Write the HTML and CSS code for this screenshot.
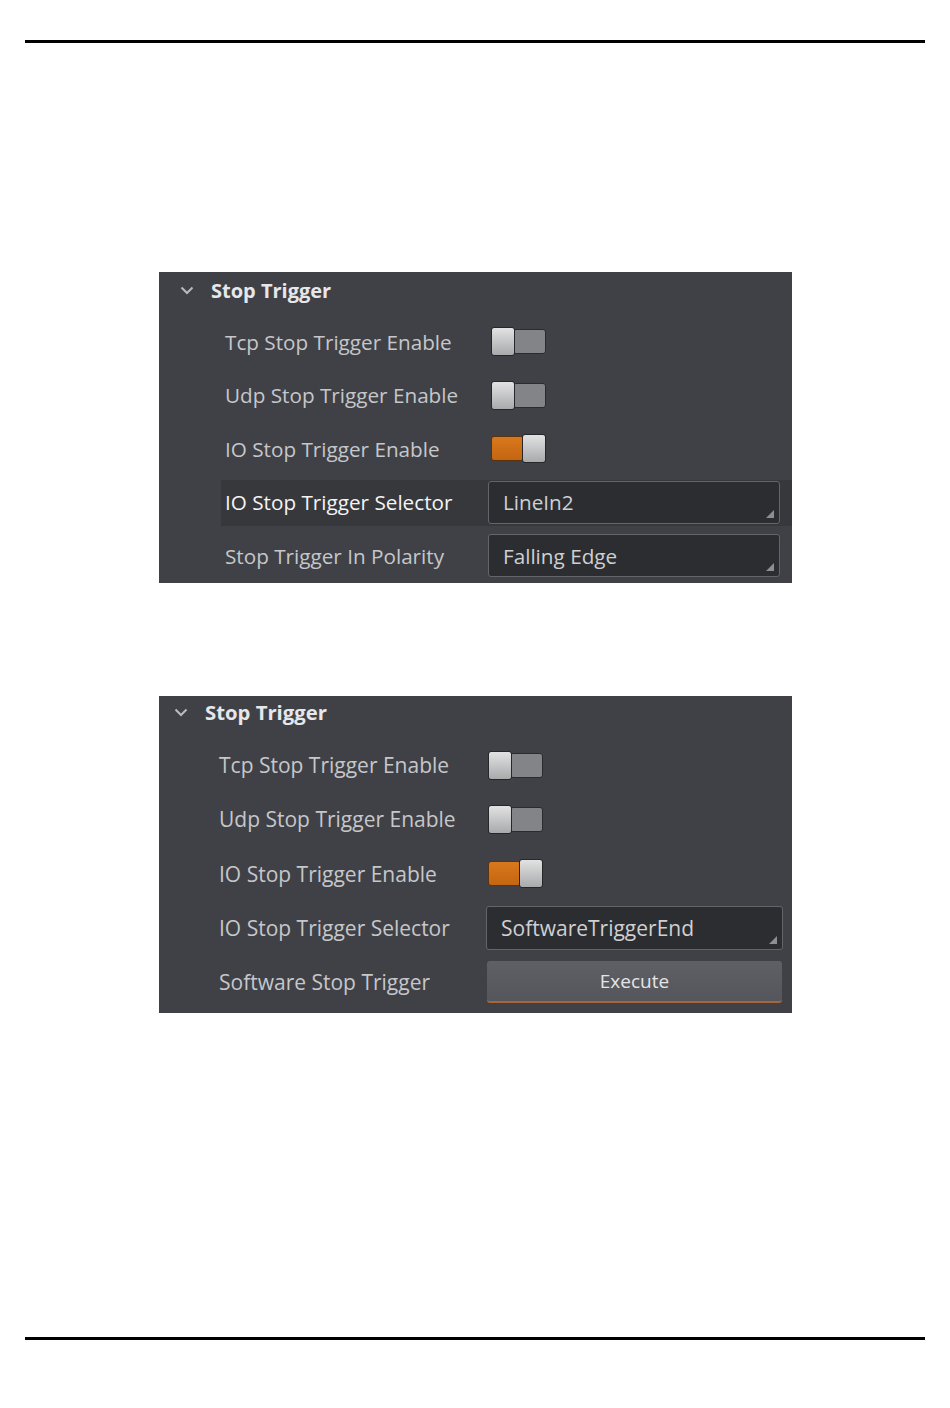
FILE: index.html
```html
<!DOCTYPE html>
<html lang="en">
<head>
  <meta charset="UTF-8">
  <meta name="viewport" content="width=device-width, initial-scale=1.0">
  <title>Stop Trigger</title>
  <link rel="stylesheet" href="styles.css">
</head>
<body>
  <div class="page">
    <div class="rule top"></div>

    <div class="panel first">
      <div class="panel-head">
        <svg class="chevron" width="14" height="9" viewBox="0 0 14 9"><path d="M1.5 1.5 L7 7 L12.5 1.5" fill="none" stroke="#b9babd" stroke-width="2"/></svg>
        <span>Stop Trigger</span>
      </div>
      <div class="row">
        <div class="label">Tcp Stop Trigger Enable</div>
        <div class="toggle"><span class="knob"></span><span class="track"></span></div>
      </div>
      <div class="row">
        <div class="label">Udp Stop Trigger Enable</div>
        <div class="toggle"><span class="knob"></span><span class="track"></span></div>
      </div>
      <div class="row">
        <div class="label">IO Stop Trigger Enable</div>
        <div class="toggle on"><span class="track"></span><span class="knob"></span></div>
      </div>
      <div class="row selected">
        <div class="label">IO Stop Trigger Selector</div>
        <div class="select">LineIn2</div>
      </div>
      <div class="row">
        <div class="label">Stop Trigger In Polarity</div>
        <div class="select">Falling Edge</div>
      </div>
    </div>

    <div class="panel second">
      <div class="panel-head">
        <svg class="chevron" width="14" height="9" viewBox="0 0 14 9"><path d="M1.5 1.5 L7 7 L12.5 1.5" fill="none" stroke="#b9babd" stroke-width="2"/></svg>
        <span>Stop Trigger</span>
      </div>
      <div class="row">
        <div class="label">Tcp Stop Trigger Enable</div>
        <div class="toggle"><span class="knob"></span><span class="track"></span></div>
      </div>
      <div class="row">
        <div class="label">Udp Stop Trigger Enable</div>
        <div class="toggle"><span class="knob"></span><span class="track"></span></div>
      </div>
      <div class="row">
        <div class="label">IO Stop Trigger Enable</div>
        <div class="toggle on"><span class="track"></span><span class="knob"></span></div>
      </div>
      <div class="row">
        <div class="label">IO Stop Trigger Selector</div>
        <div class="select wide">SoftwareTriggerEnd</div>
      </div>
      <div class="row">
        <div class="label">Software Stop Trigger</div>
        <div class="button">Execute</div>
      </div>
    </div>

    <div class="rule bottom"></div>
  </div>
</body>
</html>
```

FILE: styles.css
```css
* { margin: 0; padding: 0; box-sizing: border-box; }
body {
  background: #fff;
  font-family: "Open Sans", "Noto Sans", sans-serif;
}
.page {
  width: 950px;
  min-height: 1408px;
  padding-top: 40px;
}
.rule {
  height: 3px;
  margin: 0 25px;
  background: #000;
}
.rule.bottom { margin-top: 324px; }

.panel {
  width: 633px;
  margin-left: 159px;
  background: #404146;
  color: #c6c7ca;
  font-size: 20.7px;
}
.panel.first { margin-top: 229px; height: 311px; }
.panel.second { margin-top: 113px; height: 317px; font-size: 21px; }

.panel-head {
  display: flex;
  align-items: center;
  gap: 17px;
  padding-left: 21px;
  color: #e6e7ea;
  font-weight: bold;
  font-size: 20px;
}
.first .panel-head { height: 43px; padding-bottom: 7px; }
.second .panel-head { padding-left: 15px; height: 42px; padding-bottom: 10px; font-size: 20.3px; }

.row {
  display: flex;
  align-items: center;
  padding-left: 66px;
}
.first .row { height: 53.5px; }
.second .row { height: 54.3px; padding-left: 60px; }

.row.selected {
  margin-left: 62px;
  padding-left: 4px;
  background: linear-gradient(#404146 0, #404146 4px, #37383c 4px, #37383c 50px, #404146 50px);
}
.row.selected .label { color: #f4f4f5; }

.label {
  width: 263px;
  flex-shrink: 0;
  white-space: nowrap;
}
.second .label { width: 267px; }

.toggle {
  display: flex;
  align-items: center;
  width: 55px;
  height: 29px;
  margin-left: 3px;
}
.second .toggle { margin-left: 2px; }
.toggle .knob {
  width: 24px;
  height: 29px;
  border: 1px solid #26272a;
  border-radius: 3px;
  background: linear-gradient(#e2e2e3, #a9aaac);
  position: relative;
  z-index: 1;
}
.toggle .track {
  flex: 1;
  height: 25px;
  margin-left: -2px;
  border: 1px solid #2a2b2e;
  border-radius: 3px;
  background: #838487;
}
.toggle.on .track {
  margin-left: 0;
  margin-right: -2px;
  border-color: #5a3410;
  background: linear-gradient(#d8781d, #c46611);
}

.select {
  position: relative;
  width: 292px;
  height: 43px;
  border: 1px solid #64656a;
  border-radius: 3px;
  background: #2c2d31;
  color: #cfd0d2;
  display: flex;
  align-items: center;
  padding-left: 14px;
}
.select::after {
  content: "";
  position: absolute;
  right: 5px;
  bottom: 5px;
  border-left: 8px solid transparent;
  border-bottom: 8px solid #8d8e91;
}
.select.wide { width: 297px; height: 44px; }

.button {
  width: 295px;
  height: 42px;
  margin-left: 1px;
  border-radius: 3px;
  border-bottom: 2px solid #a5663c;
  background: linear-gradient(#5e6065, #54565b);
  color: #e4e4e6;
  font-size: 19px;
  display: flex;
  align-items: center;
  justify-content: center;
}
```
